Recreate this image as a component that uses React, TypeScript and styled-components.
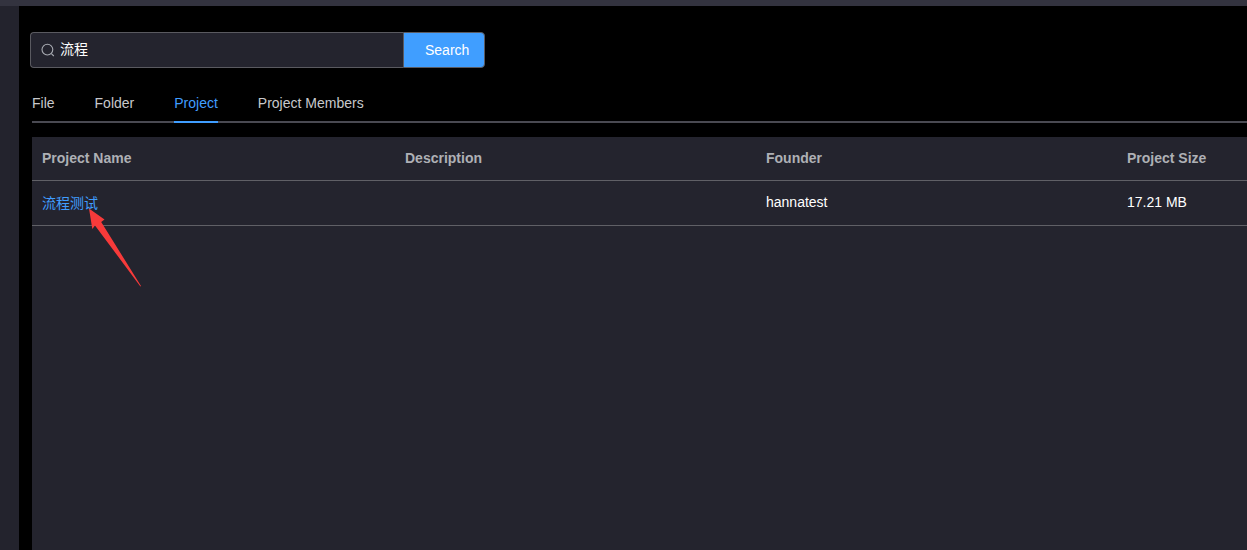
import styled, { createGlobalStyle } from "styled-components";

const GlobalStyle = createGlobalStyle`
  html, body {
    margin: 0;
    padding: 0;
    height: 100%;
    overflow: hidden;
    background: #000;
    font-family: "Liberation Sans", Arial, "Noto Sans CJK SC", sans-serif;
  }
  #root {
    height: 100%;
  }
`;

const tabs = ["File", "Folder", "Project", "Project Members"];

const App = () => {
  return (
    <StyledPage>
      <GlobalStyle />
      <StyledTopBar />
      <StyledBody>
        <StyledSidebar />
        <StyledMain>
          <StyledSearch>
            <StyledInputBox>
              <svg width="14" height="14" viewBox="0 0 14 14" fill="none">
                <circle cx="6.4" cy="6.6" r="5.4" stroke="#a8abb2" strokeWidth="1.1" />
                <path d="M10.4 10.6L12.8 13" stroke="#a8abb2" strokeWidth="1.1" />
              </svg>
              <StyledInputText>流程</StyledInputText>
            </StyledInputBox>
            <StyledSearchButton>Search</StyledSearchButton>
          </StyledSearch>
          <StyledTabs>
            {tabs.map((tab) => (
              <StyledTab key={tab} $active={tab === "Project"}>
                {tab}
              </StyledTab>
            ))}
          </StyledTabs>
          <StyledTable>
            <StyledHeadRow>
              <StyledHeadCell>Project Name</StyledHeadCell>
              <StyledHeadCell>Description</StyledHeadCell>
              <StyledHeadCell>Founder</StyledHeadCell>
              <StyledHeadCell>Project Size</StyledHeadCell>
            </StyledHeadRow>
            <StyledRow>
              <StyledLinkCell>流程测试</StyledLinkCell>
              <StyledCell></StyledCell>
              <StyledCell>hannatest</StyledCell>
              <StyledCell>17.21 MB</StyledCell>
            </StyledRow>
            <StyledArrow width="60" height="86" viewBox="0 0 60 86">
              <path d="M0 0.5L15.5 11.5L12.2 14L52 78L51.4 78.4L6 17.5L3.3 21Z" fill="#f73a3a" />
            </StyledArrow>
          </StyledTable>
        </StyledMain>
      </StyledBody>
    </StyledPage>
  );
};

const StyledPage = styled.div`
  display: flex;
  flex-direction: column;
  height: 550px;
  overflow: hidden;
  background-color: #000;
`;

const StyledTopBar = styled.div`
  flex: none;
  height: 6px;
  background-color: #33333f;
`;

const StyledBody = styled.div`
  flex: 1;
  display: flex;
  min-height: 0;
`;

const StyledSidebar = styled.div`
  flex: none;
  width: 19px;
  background-color: #23232d;
`;

const StyledMain = styled.main`
  flex: 1;
  min-width: 0;
  display: flex;
  flex-direction: column;
  padding: 26px 0 0 11px;
  background-color: #000;
`;

const StyledSearch = styled.div`
  flex: none;
  display: flex;
  width: 455px;
  height: 36px;
  box-sizing: border-box;
`;

const StyledInputBox = styled.div`
  flex: 1;
  display: flex;
  align-items: center;
  gap: 5px;
  padding-left: 10px;
  box-sizing: border-box;
  background-color: #24242e;
  border: 1px solid #5a5a60;
  border-right: none;
  border-radius: 4px 0 0 4px;
`;

const StyledInputText = styled.span`
  color: #fff;
  font-size: 14px;
  line-height: 18px;
  padding-bottom: 2px;
`;

const StyledSearchButton = styled.div`
  flex: none;
  width: 82px;
  display: flex;
  align-items: center;
  padding-left: 21px;
  box-sizing: border-box;
  color: #fff;
  font-size: 14px;
  background-color: #409eff;
  border: 1px solid #5a5a60;
  border-radius: 0 4px 4px 0;
`;

const StyledTabs = styled.div`
  flex: none;
  display: flex;
  gap: 40px;
  height: 40px;
  margin: 15px 0 0 2px;
  box-sizing: border-box;
  border-bottom: 2px solid #4a4a52;
`;

const StyledTab = styled.div<{ $active: boolean }>`
  height: 40px;
  line-height: 40px;
  box-sizing: border-box;
  font-size: 14px;
  color: ${({ $active }) => ($active ? "#409eff" : "#c8c9cc")};
  border-bottom: 2px solid ${({ $active }) => ($active ? "#409eff" : "transparent")};
`;

const StyledTable = styled.div`
  position: relative;
  flex: 1;
  margin: 14px 0 0 2px;
  background-color: #24242e;
`;

const StyledHeadRow = styled.div`
  display: grid;
  grid-template-columns: 363px 361px 361px 1fr;
  height: 44px;
  box-sizing: border-box;
  border-bottom: 1px solid #606066;
`;

const StyledRow = styled(StyledHeadRow)`
  height: 45px;
`;

const StyledHeadCell = styled.div`
  display: flex;
  align-items: center;
  padding: 0 0 1px 10px;
  font-size: 14px;
  font-weight: bold;
  color: #aeb0b5;
`;

const StyledCell = styled.div`
  display: flex;
  align-items: center;
  padding: 0 0 3px 10px;
  font-size: 14px;
  color: #fff;
`;

const StyledLinkCell = styled(StyledCell)`
  color: #409eff;
`;

const StyledArrow = styled.svg`
  position: absolute;
  left: 57px;
  top: 71px;
`;

export default App;
